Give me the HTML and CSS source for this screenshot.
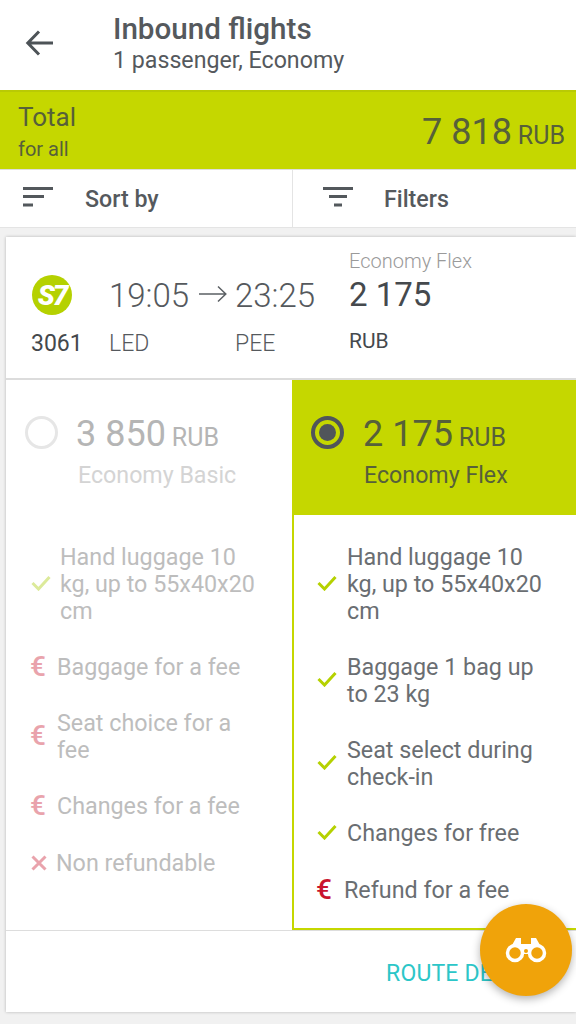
FILE: index.html
```html
<!DOCTYPE html>
<html lang="en">
<head>
<meta charset="utf-8">
<title>Inbound flights</title>
<link rel="stylesheet" href="styles.css">
</head>
<body>
<div class="screen">
  <header class="topbar">
    <svg class="back" viewBox="0 0 30 30" width="30" height="30"><path d="M28 15H3M14 3.500 2.800 15 14 26.500" fill="none" stroke="#4d5357" stroke-width="3"/></svg>
    <div class="titles">
      <div class="title">Inbound flights</div>
      <div class="subtitle">1 passenger, Economy</div>
    </div>
  </header>
  <section class="total">
    <div class="total-left">
      <div class="total-label">Total</div>
      <div class="total-for">for all</div>
    </div>
    <div class="total-price">7 818 <span class="total-cur">RUB</span></div>
  </section>
  <nav class="tools">
    <div class="tool tool-sort">
      <svg viewBox="0 0 30 22" width="30" height="22"><path d="M0 2.500H30M0 10.500H21M0 19H10" stroke="#53585c" stroke-width="3"/></svg>
      <span>Sort by</span>
    </div>
    <div class="tool tool-filter">
      <svg viewBox="0 0 30 22" width="30" height="22"><path d="M0 2.500H30M6 10.500H24M11 19H19" stroke="#53585c" stroke-width="3"/></svg>
      <span>Filters</span>
    </div>
  </nav>
  <main class="card">
    <section class="flight">
      <div class="col-carrier">
        <div class="logo"><span>S7</span></div>
        <div class="number">3061</div>
      </div>
      <div class="col-dep">
        <div class="time-row">
          <span class="time">19:05</span>
          <svg viewBox="0 0 28 18" width="28" height="18"><path d="M0 9H26.500M19 1.500 26.800 9 19 16.500" fill="none" stroke="#5b6064" stroke-width="1.500"/></svg>
        </div>
        <div class="airport">LED</div>
      </div>
      <div class="col-arr">
        <div class="time">23:25</div>
        <div class="airport">PEE</div>
      </div>
      <div class="col-price">
        <div class="fare-name">Economy Flex</div>
        <div class="fare-price">2 175</div>
        <div class="fare-cur">RUB</div>
      </div>
    </section>
    <section class="fares">
      <article class="fare fare-off">
        <div class="fare-head">
          <div class="head-row">
            <span class="radio"></span>
            <span class="head-price">3 850 <span class="head-cur">RUB</span></span>
          </div>
          <div class="head-name">Economy Basic</div>
        </div>
        <ul class="features">
          <li><svg class="check" viewBox="0 0 20 16" width="20" height="16"><path d="M1.500 8 7.500 14 18.500 2" fill="none" stroke="currentColor" stroke-width="3"/></svg><span>Hand luggage 10 kg, up to 55x40x20 cm</span></li>
          <li><span class="euro">€</span><span>Baggage for a fee</span></li>
          <li><span class="euro">€</span><span>Seat choice for a fee</span></li>
          <li><span class="euro">€</span><span>Changes for a fee</span></li>
          <li><svg class="cross" viewBox="0 0 16 16" width="16" height="16"><path d="M1.500 1.500 14.500 14.500M14.500 1.500 1.500 14.500" fill="none" stroke="currentColor" stroke-width="3"/></svg><span>Non refundable</span></li>
        </ul>
      </article>
      <article class="fare fare-on">
        <div class="fare-head">
          <div class="head-row">
            <span class="radio"><span class="radio-dot"></span></span>
            <span class="head-price">2 175 <span class="head-cur">RUB</span></span>
          </div>
          <div class="head-name">Economy Flex</div>
        </div>
        <ul class="features">
          <li><svg class="check" viewBox="0 0 20 16" width="20" height="16"><path d="M1.500 8 7.500 14 18.500 2" fill="none" stroke="currentColor" stroke-width="3"/></svg><span>Hand luggage 10 kg, up to 55x40x20 cm</span></li>
          <li><svg class="check" viewBox="0 0 20 16" width="20" height="16"><path d="M1.500 8 7.500 14 18.500 2" fill="none" stroke="currentColor" stroke-width="3"/></svg><span>Baggage 1 bag up to 23 kg</span></li>
          <li><svg class="check" viewBox="0 0 20 16" width="20" height="16"><path d="M1.500 8 7.500 14 18.500 2" fill="none" stroke="currentColor" stroke-width="3"/></svg><span>Seat select during check-in</span></li>
          <li><svg class="check" viewBox="0 0 20 16" width="20" height="16"><path d="M1.500 8 7.500 14 18.500 2" fill="none" stroke="currentColor" stroke-width="3"/></svg><span>Changes for free</span></li>
          <li><span class="euro">€</span><span>Refund for a fee</span></li>
        </ul>
      </article>
    </section>
    <footer class="route">ROUTE DETAILS</footer>
  </main>
  <button class="fab" aria-label="Search">
    <svg viewBox="0 0 42 26" width="42" height="26">
      <path d="M11 1h5v6h10V1h5l9 16H2z" fill="#fff"/>
      <circle cx="10" cy="16" r="7.500" fill="#f0a30a" stroke="#fff" stroke-width="3.500"/>
      <circle cx="32" cy="16" r="7.500" fill="#f0a30a" stroke="#fff" stroke-width="3.500"/>
      <circle cx="21" cy="14" r="2" fill="#f0a30a"/>
    </svg>
  </button>
</div>
</body>
</html>
```
FILE: styles.css
```css
* { box-sizing: border-box; }
html, body { margin: 0; padding: 0; }
body {
  width: 576px;
  height: 1024px;
  overflow: hidden;
  background: #f1f1f1;
  font-family: Roboto, "Liberation Sans", sans-serif;
  color: #55595d;
}
.screen { position: relative; width: 576px; height: 1024px; overflow: hidden; }

.topbar {
  height: 90px;
  background: #fff;
  display: flex;
  align-items: flex-start;
  padding: 13px 0 0 25px;
}
.back { margin-top: 15px; flex: none; }
.titles { margin-left: 58px; }
.title { font-size: 29.6px; font-weight: 500; line-height: 33px; color: #55595d; }
.subtitle { font-size: 23.2px; line-height: 28px; color: #55595d; }

.total {
  height: 79px;
  background: #c5d700;
  border-top: 2px solid #b9ca04;
  display: flex;
  justify-content: space-between;
  padding: 10px 11px 0 18px;
}
.total-label { font-size: 26px; line-height: 30px; color: #56603a; }
.total-for { font-size: 20px; line-height: 26px; margin-top: 4px; color: #56603a; }
.total-price { font-size: 36px; line-height: 40px; margin-top: 10px; color: #56603a; }
.total-cur { font-size: 25px; margin-left: -3px; }

.tools {
  height: 59px;
  background: #fff;
  border-top: 1px solid #ddd;
  border-bottom: 1px solid #e4e4e4;
  display: flex;
}
.tool {
  display: flex;
  align-items: center;
  font-size: 23.2px;
  font-weight: 500;
  color: #55595d;
  padding: 1px 0 0 23px;
}
.tool svg { flex: none; margin-right: 32px; margin-top: -4px; }
.tool-sort { width: 293px; border-right: 1px solid #e4e4e4; }
.tool-filter { flex: 1; padding-left: 30px; }
.tool-filter svg { margin-right: 31px; }

.card {
  margin: 9px 0 0 6px;
  height: 775px;
  background: #fff;
  box-shadow: 0 0 3px rgba(0, 0, 0, .25);
  display: flex;
  flex-direction: column;
}

.flight {
  height: 143px;
  display: flex;
  border-bottom: 2px solid #dcdcdc;
  flex: none;
}
.col-carrier { width: 104px; padding: 38px 0 0 25px; flex: none; }
.logo {
  width: 40px;
  height: 40px;
  margin-left: 1px;
  border-radius: 50%;
  background: #b5d100;
  color: #fff;
  display: flex;
  align-items: center;
  justify-content: center;
  font-size: 28px;
  font-weight: 900;
  font-style: italic;
  letter-spacing: -2px;
}
.number { font-size: 23px; line-height: 28px; margin-top: 15px; color: #44484c; }
.col-dep { width: 126px; padding-top: 39px; flex: none; margin-left: -1px; }
.col-arr { width: 113px; padding-top: 39px; flex: none; margin-right: 1px; }
.time-row { display: flex; align-items: center; height: 40px; }
.time-row svg { margin-left: 10px; margin-top: -4px; flex: none; }
.time { font-size: 33px; line-height: 40px; font-weight: 300; color: #55595d; }
.airport { font-size: 23px; line-height: 28px; font-weight: 300; margin-top: 14px; color: #55595d; }
.col-price { flex: 1; padding-top: 12px; }
.fare-name { font-size: 20px; line-height: 24px; font-weight: 300; color: #9a9a9a; }
.fare-price { font-size: 33px; line-height: 40px; margin-top: 2px; color: #45494d; }
.fare-cur { font-size: 21px; line-height: 26px; margin-top: 13px; color: #45494d; }

.fares { display: flex; height: 550px; flex: none; }
.fare { display: flex; flex-direction: column; }
.fare-off { width: 286px; color: #bdbdbd; }
.fare-on { flex: 1; }
.fare-head { height: 135px; padding: 33px 0 0 19px; flex: none; }
.fare-on .fare-head { background: #c5d700; padding-left: 19px; }
.head-row { display: flex; align-items: center; height: 40px; }
.radio {
  width: 33px;
  height: 33px;
  border-radius: 50%;
  border: 3px solid #e6e6e6;
  flex: none;
  display: flex;
  align-items: center;
  justify-content: center;
  margin-top: -2px;
}
.fare-on .radio { border-color: #50555a; border-width: 4px; }
.radio-dot { width: 17px; height: 17px; border-radius: 50%; background: #50555a; }
.head-price { font-size: 36px; line-height: 40px; margin: 5px 0 0 18px; color: #b5b5b5; }
.fare-on .head-price { color: #56603a; margin-left: 19px; }
.head-cur { font-size: 25px; margin-left: -3px; }
.head-name { font-size: 23.2px; line-height: 28px; margin: 8px 0 0 53px; color: #d4d4d4; }
.fare-on .head-name { color: #56603a; margin-left: 53px; }

.features {
  list-style: none;
  margin: 0;
  padding: 29px 30px 0 25px;
  display: flex;
  flex-direction: column;
  gap: 29px;
  font-size: 23.3px;
  line-height: 27px;
  flex: 1;
}
.features li { display: flex; align-items: center; }
.features li > span:last-child { flex: 1; }
.features li:last-child { margin-top: 1px; }
.fare-off .features { color: #bdbdbd; }
.fare-on .features {
  color: #6a6e72;
  border-left: 2px solid #c5d700;
  border-bottom: 2px solid #c5d700;
  padding-left: 23px;
  padding-right: 25px;
}
.check { flex: none; margin: -4px 10px 0 0; color: #b5d100; }
.fare-off .check { color: #dcea9a; margin-right: 9px; }
.euro { flex: none; width: 28px; font-size: 28px; line-height: 27px; font-weight: 500; color: #c9142e; margin: -3px 0 0 -1px; }
.fare-off .euro { color: #e9a3ac; width: 27px; }
.cross { flex: none; margin-right: 9px; margin-top: -2px; color: #e9a3ac; }

.route {
  flex: 1;
  display: flex;
  align-items: center;
  justify-content: flex-end;
  padding: 3px 22px 0 0;
  font-size: 23px;
  letter-spacing: .15px;
  color: #2cc6c8;
  border-top: 1px solid #ddd;
}

.fab {
  position: absolute;
  left: 480px;
  top: 904px;
  width: 92px;
  height: 92px;
  border: none;
  border-radius: 50%;
  padding: 0;
  background: #f0a30a;
  box-shadow: 0 3px 8px rgba(0, 0, 0, .3);
  display: flex;
  align-items: center;
  justify-content: center;
}
```
